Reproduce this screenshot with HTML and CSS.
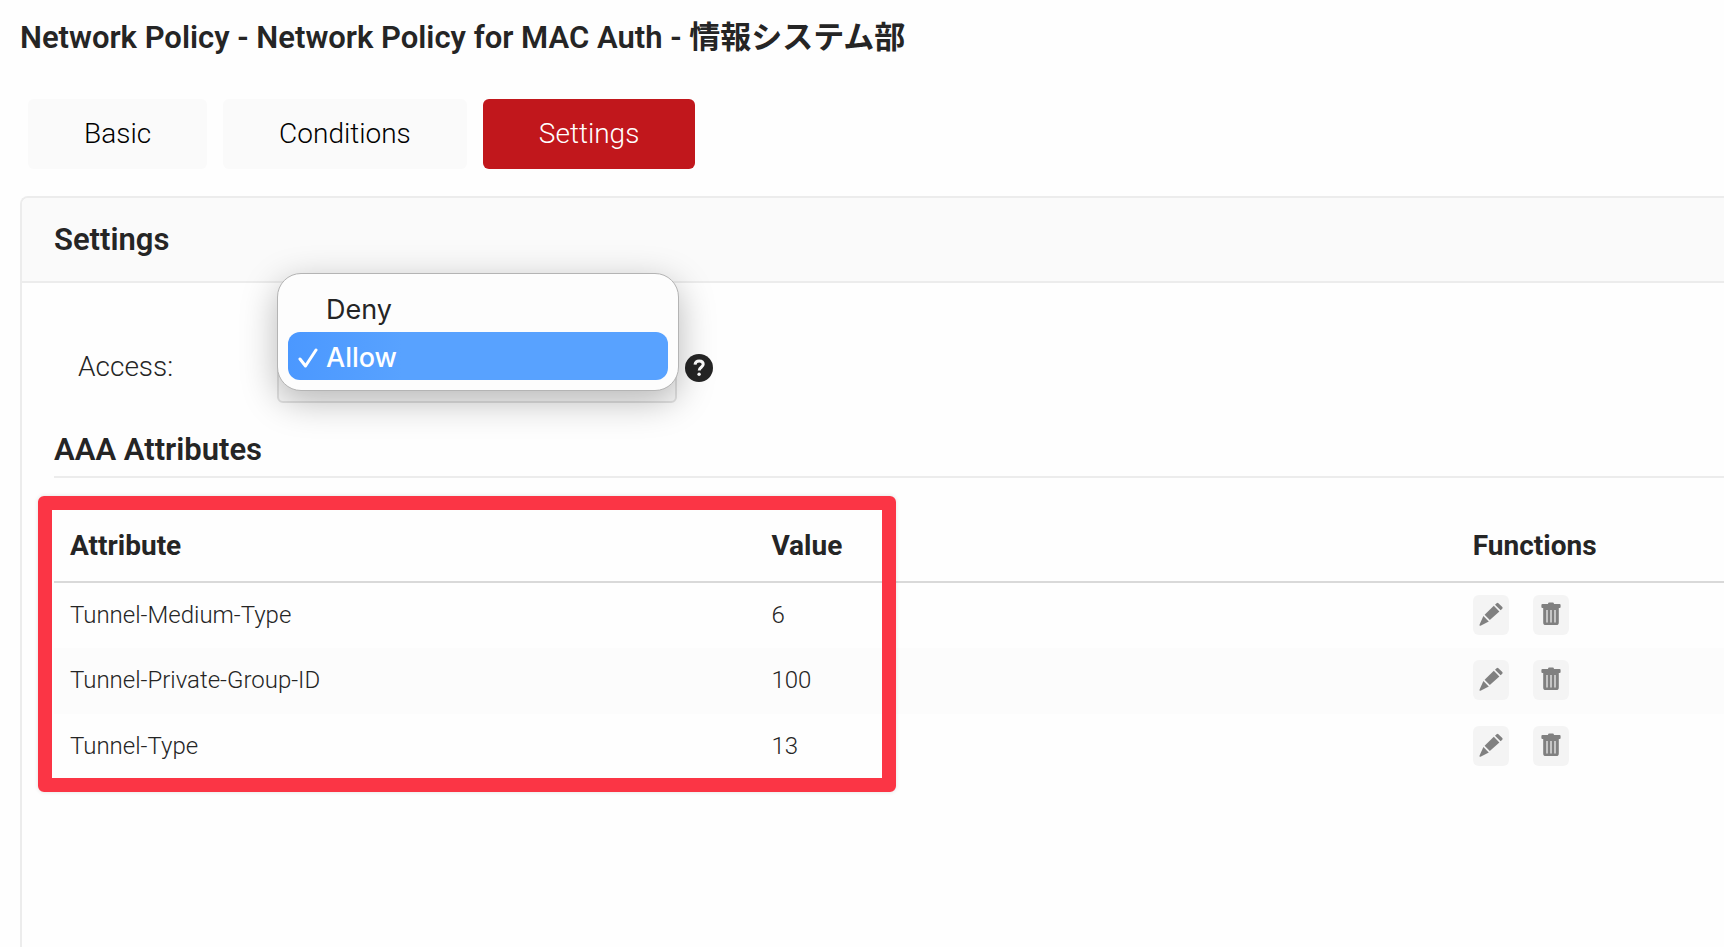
FILE: index.html
```
<!DOCTYPE html>
<html lang="ja">
<head>
  <meta charset="UTF-8" />
  <meta name="viewport" content="width=device-width, initial-scale=1.0"/>
  <title>Network Policy</title>
  <link rel="stylesheet" href="styles.css">
</head>
<body>
  <svg width="0" height="0" class="sprite" aria-hidden="true">
    <symbol id="icon-edit" viewBox="0 0 24 24">
      <path d="M17.6 1.2q0.9-0.9 1.8 0l3.9 3.9q0.7 0.8 0 1.6l-1.7 1.5-5.6-5.4z"/>
      <path d="M14.8 3.8l5.6 5.6-9.6 8.6-5.2-5.2z"/>
      <path d="M4.4 14l5.4 5.4-7.8 4.2q-1.8 0.8-1.4-1z"/>
    </symbol>
    <symbol id="icon-delete" viewBox="0 0 20 24">
      <path fill-rule="evenodd" d="M7 2q0-1.4 1.4-1.4h3.2q1.4 0 1.4 1.4h5.6q1 0 1 1v2q0 1-1 1h-0.8v14.4q0 2.6-2.6 2.6h-10.4q-2.6 0-2.6-2.6v-14.4h-0.8q-1 0-1-1v-2q0-1 1-1zM5.4 8v12.4h1.2v-12.4zM9.4 8v12.4h1.2v-12.4zM13.4 8v12.4h1.2v-12.4z"/>
    </symbol>
  </svg>

  <h1>Network Policy - Network Policy for MAC Auth - 情報システム部</h1>

  <nav class="tabs">
    <button class="tab">Basic</button>
    <button class="tab">Conditions</button>
    <button class="tab active">Settings</button>
  </nav>

  <section class="panel">
    <h2 class="panel-title">Settings</h2>

    <div class="panel-body">
      <div class="form-row">
        <label for="access">Access:</label>
        <div class="select-wrap">
          <select id="access">
            <option>Deny</option>
            <option selected>Allow</option>
          </select>
          <div class="menu">
            <button class="menu-item">Deny</button>
            <button class="menu-item selected">
              <svg class="check" viewBox="0 0 20 20" aria-hidden="true"><path d="M2 11l5.5 7L18 2"/></svg>
              Allow
            </button>
          </div>
        </div>
        <svg class="help" viewBox="0 0 28 28" role="img" aria-label="Help">
          <circle cx="14" cy="14" r="14"/>
          <path d="M10 10.6c0.3-2.3 1.9-3.5 4.2-3.5 2.4 0 4 1.2 4 3.2 0 2.9-4 3-4 6.2"/>
          <circle class="dot" cx="14.1" cy="20.3" r="1.7"/>
        </svg>
      </div>

      <h3>AAA Attributes</h3>

      <div class="table-wrap">
        <table>
          <thead>
            <tr><th>Attribute</th><th>Value</th><th>Functions</th></tr>
          </thead>
          <tbody>
            <tr>
              <td>Tunnel-Medium-Type</td>
              <td>6</td>
              <td>
                <div class="actions">
                  <button class="icon-btn" aria-label="Edit"><svg width="24" height="24"><use href="#icon-edit"/></svg></button>
                  <button class="icon-btn" aria-label="Delete"><svg width="20" height="24"><use href="#icon-delete"/></svg></button>
                </div>
              </td>
            </tr>
            <tr>
              <td>Tunnel-Private-Group-ID</td>
              <td>100</td>
              <td>
                <div class="actions">
                  <button class="icon-btn" aria-label="Edit"><svg width="24" height="24"><use href="#icon-edit"/></svg></button>
                  <button class="icon-btn" aria-label="Delete"><svg width="20" height="24"><use href="#icon-delete"/></svg></button>
                </div>
              </td>
            </tr>
            <tr>
              <td>Tunnel-Type</td>
              <td>13</td>
              <td>
                <div class="actions">
                  <button class="icon-btn" aria-label="Edit"><svg width="24" height="24"><use href="#icon-edit"/></svg></button>
                  <button class="icon-btn" aria-label="Delete"><svg width="20" height="24"><use href="#icon-delete"/></svg></button>
                </div>
              </td>
            </tr>
          </tbody>
        </table>
        <div class="highlight"></div>
      </div>
    </div>
  </section>
</body>
</html>
```
FILE: styles.css
```
* {
  box-sizing: border-box;
}

body {
  display: flex;
  flex-direction: column;
  min-height: 100vh;
  margin: 0;
  padding: 20px 0 0 20px;
  font-family: Roboto, "Noto Sans CJK JP", sans-serif;
  font-size: 28px;
  font-weight: 300;
  color: #252525;
  background: #fefefe;
}

button {
  font: inherit;
  border: none;
  cursor: pointer;
}

.sprite {
  position: absolute;
}

h1, h2, h3 {
  margin: 0;
  font-size: 31px;
  line-height: 36px;
  font-weight: 600;
}

.tabs {
  display: flex;
  gap: 16px;
  margin: 43px 0 27px;
  padding-left: 8px;
}

.tab {
  height: 70px;
  padding: 0 56px 2px;
  background: #fafafa;
  color: #000;
  border-radius: 6px;
}

.tab.active {
  background: #c1171c;
  color: #fff;
}

/* runs off the right side of the window */
.panel {
  flex: 1;
  border: solid #ececec;
  border-width: 2px 0 0 2px;
  border-radius: 8px 0 0 0;
}

.panel-title {
  padding: 24px 32px 23px;
  background: #fafafa;
  border-bottom: 2px solid #ececec;
  border-radius: 6px 0 0 0;
}

.panel-body {
  padding: 50px 0 0 32px;
}

.form-row {
  display: flex;
  align-items: center;
  padding-left: 24px;
}

.form-row label {
  width: 199px;
  padding-bottom: 4px;
}

.select-wrap {
  position: relative;
  width: 400px;
}

select {
  display: block;
  width: 100%;
  height: 70px;
  padding: 0 20px;
  appearance: none;
  font: inherit;
  color: #252525;
  background: #fafafa;
  border: 2px solid #e2e2e2;
  border-radius: 6px;
}

.menu {
  position: absolute;
  left: 0;
  bottom: 12px;
  width: 402px;
  padding: 10px;
  background: #fdfdfd;
  border: 1px solid #b4b4b4;
  border-radius: 24px;
  box-shadow: 0 10px 36px rgba(0,0,0,0.28);
}

.menu-item {
  display: flex;
  align-items: center;
  position: relative;
  width: 100%;
  height: 48px;
  padding: 3px 0 0 38px;
  font-family: Inter, sans-serif;
  font-size: 27px;
  font-weight: 400;
  color: #252525;
  background: none;
  border-radius: 12px;
}

.menu-item.selected {
  background: linear-gradient(90deg, #4b98ff, #58a2ff 30%);
  color: #fff;
  font-weight: 500;
}

.check {
  position: absolute;
  left: 10px;
  width: 20px;
  height: 20px;
  fill: none;
  stroke: #fff;
  stroke-width: 3;
  stroke-linecap: round;
  stroke-linejoin: round;
}

.help {
  width: 28px;
  height: 28px;
  margin-left: 8px;
  fill: #252525;
}

.help path {
  fill: none;
  stroke: #fff;
  stroke-width: 3;
}

.help .dot {
  fill: #fff;
}

h3 {
  margin-top: 29px;
  padding-bottom: 8px;
  border-bottom: 2px solid #ececec;
}

.table-wrap {
  position: relative;
  margin-top: 31px;
}

table {
  width: 100%;
  table-layout: fixed;
  border-collapse: collapse;
}

th {
  width: 42%;
  height: 73px;
  padding: 0 16px;
  text-align: left;
  font-weight: 700;
  border-bottom: 2px solid #d9d9d9;
}

th:last-child {
  width: auto;
}

td {
  height: 66px;
  padding: 0 16px 2px;
  font-size: 24px;
}

tbody tr:nth-child(even) {
  background: #fcfcfc;
}

.actions {
  display: flex;
  gap: 24px;
}

.icon-btn {
  display: flex;
  align-items: center;
  justify-content: center;
  width: 36px;
  height: 40px;
  padding: 0 0 2px;
  background: #f4f4f4;
  border-radius: 6px;
}

.icon-btn svg {
  fill: #808080;
}

/* frame over the Attribute and Value columns */
.highlight {
  position: absolute;
  top: -13px;
  bottom: -12px;
  left: -16px;
  width: calc(42% + 157px);
  border: 14px solid #fb3545;
  border-radius: 6px;
  box-shadow: 0 0 4px rgba(0,0,0,0.12);
  pointer-events: none;
}
```
